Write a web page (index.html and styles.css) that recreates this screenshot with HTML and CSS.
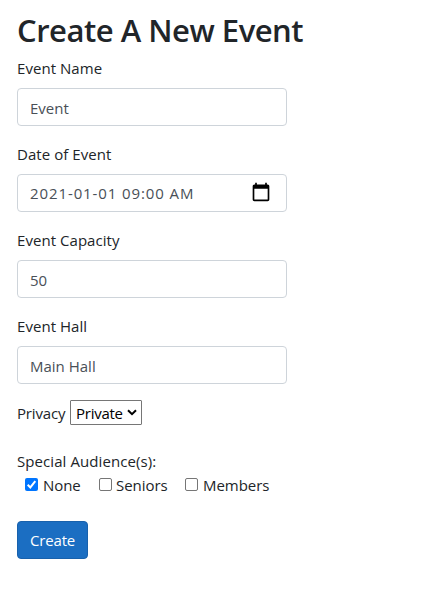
FILE: index.html
```html
<!DOCTYPE html>
<html lang="en">
<head>
<meta charset="utf-8">
<title>Create A New Event</title>
<link rel="stylesheet" href="styles.css">
</head>
<body>
<form class="event-form">
  <h1>Create A New Event</h1>
  <div class="group">
    <label for="name">Event Name</label>
    <input id="name" class="control" type="text" value="Event">
  </div>
  <div class="group">
    <label>Date of Event</label>
    <div class="control date">
      <span>2021-01-01 09:00 AM</span>
      <svg class="calendar" viewBox="0 0 24 24"><path d="M20 3h-1V1h-2v2H7V1H5v2H4c-1.1 0-2 .9-2 2v16c0 1.1.9 2 2 2h16c1.1 0 2-.9 2-2V5c0-1.1-.9-2-2-2zm0 18H4V8h16v13z"/></svg>
    </div>
  </div>
  <div class="group">
    <label for="capacity">Event Capacity</label>
    <input id="capacity" class="control" type="text" value="50">
  </div>
  <div class="group">
    <label for="hall">Event Hall</label>
    <input id="hall" class="control" type="text" value="Main Hall">
  </div>
  <div class="privacy">
    <span class="privacy-label">Privacy</span>
    <div class="select"><span>Private</span><svg class="chevron" viewBox="0 0 10 7"><path d="M1 1.2 5 5.2 9 1.2"/></svg></div>
  </div>
  <div class="audience-title">Special Audience(s):</div>
  <div class="audiences">
    <div class="option none"><span class="box checked"><svg viewBox="0 0 13 13"><path d="M2.7 6.8 5.3 9.4 10.3 3.2"/></svg></span><span>None</span></div>
    <div class="option seniors"><span class="box"></span><span>Seniors</span></div>
    <div class="option members"><span class="box"></span><span>Members</span></div>
  </div>
  <button class="create" type="button">Create</button>
</form>
</body>
</html>
```
FILE: styles.css
```css
* { box-sizing: border-box; }
body {
  margin: 0;
  background: #fff;
  color: #212529;
  font: 400 15px/24px "Open Sans", "Noto Sans", sans-serif;
  letter-spacing: -0.15px;
}
.event-form { width: 270px; margin-left: 17px; padding-top: 11px; }
h1 {
  margin: 0 0 7px;
  font-size: 31px;
  line-height: 38px;
  font-weight: 600;
  letter-spacing: -0.48px;
  white-space: nowrap;
}
.group { margin-bottom: 16px; }
label { display: block; height: 24px; margin-bottom: 8px; letter-spacing: 0.05px; }
.control {
  display: block;
  width: 100%;
  height: 38px;
  padding: 7px 12px 5px;
  border: 1px solid #ced4da;
  border-radius: 4px;
  background: #fff;
  color: #495057;
  font: inherit;
  letter-spacing: 0;
}
.date { display: flex; justify-content: space-between; padding-right: 15px; padding-top: 6px; letter-spacing: 0.9px; }
.calendar { width: 20px; height: 20px; margin-top: 1px; fill: #000; }
.privacy { display: flex; align-items: flex-start; height: 26px; }
.privacy-label { width: 53px; padding-top: 1px; }
.select {
  display: flex;
  align-items: center;
  justify-content: space-between;
  width: 72px;
  height: 25px;
  padding: 1px 4px 0 5px;
  border: 1px solid #767676;
  border-radius: 1px;
  color: #000;
}
.select span { letter-spacing: -0.25px; }
.chevron { width: 10px; height: 7px; margin-top: -2px; fill: none; stroke: #000; stroke-width: 2; }
.audience-title { margin-top: 23px; letter-spacing: 0.08px; }
.audiences { display: flex; padding-left: 8px; }
.option { display: flex; align-items: center; gap: 5px; white-space: nowrap; letter-spacing: -0.05px; }
.none { width: 74px; }
.seniors { width: 86px; gap: 4px; }
.box { width: 13px; height: 13px; margin-top: -2px; border: 1px solid #767676; border-radius: 2px; background: #fff; }
.box.checked { border: 0; background: #0075ff; }
.box svg { display: block; fill: none; stroke: #fff; stroke-width: 2; }
.create {
  display: block;
  width: 71px;
  height: 38px;
  margin-top: 24px;
  padding: 0;
  border: 1px solid #1861ac;
  border-radius: 4px;
  background: #1b6ec2;
  color: #fff;
  font: inherit;
  letter-spacing: inherit;
}
```
